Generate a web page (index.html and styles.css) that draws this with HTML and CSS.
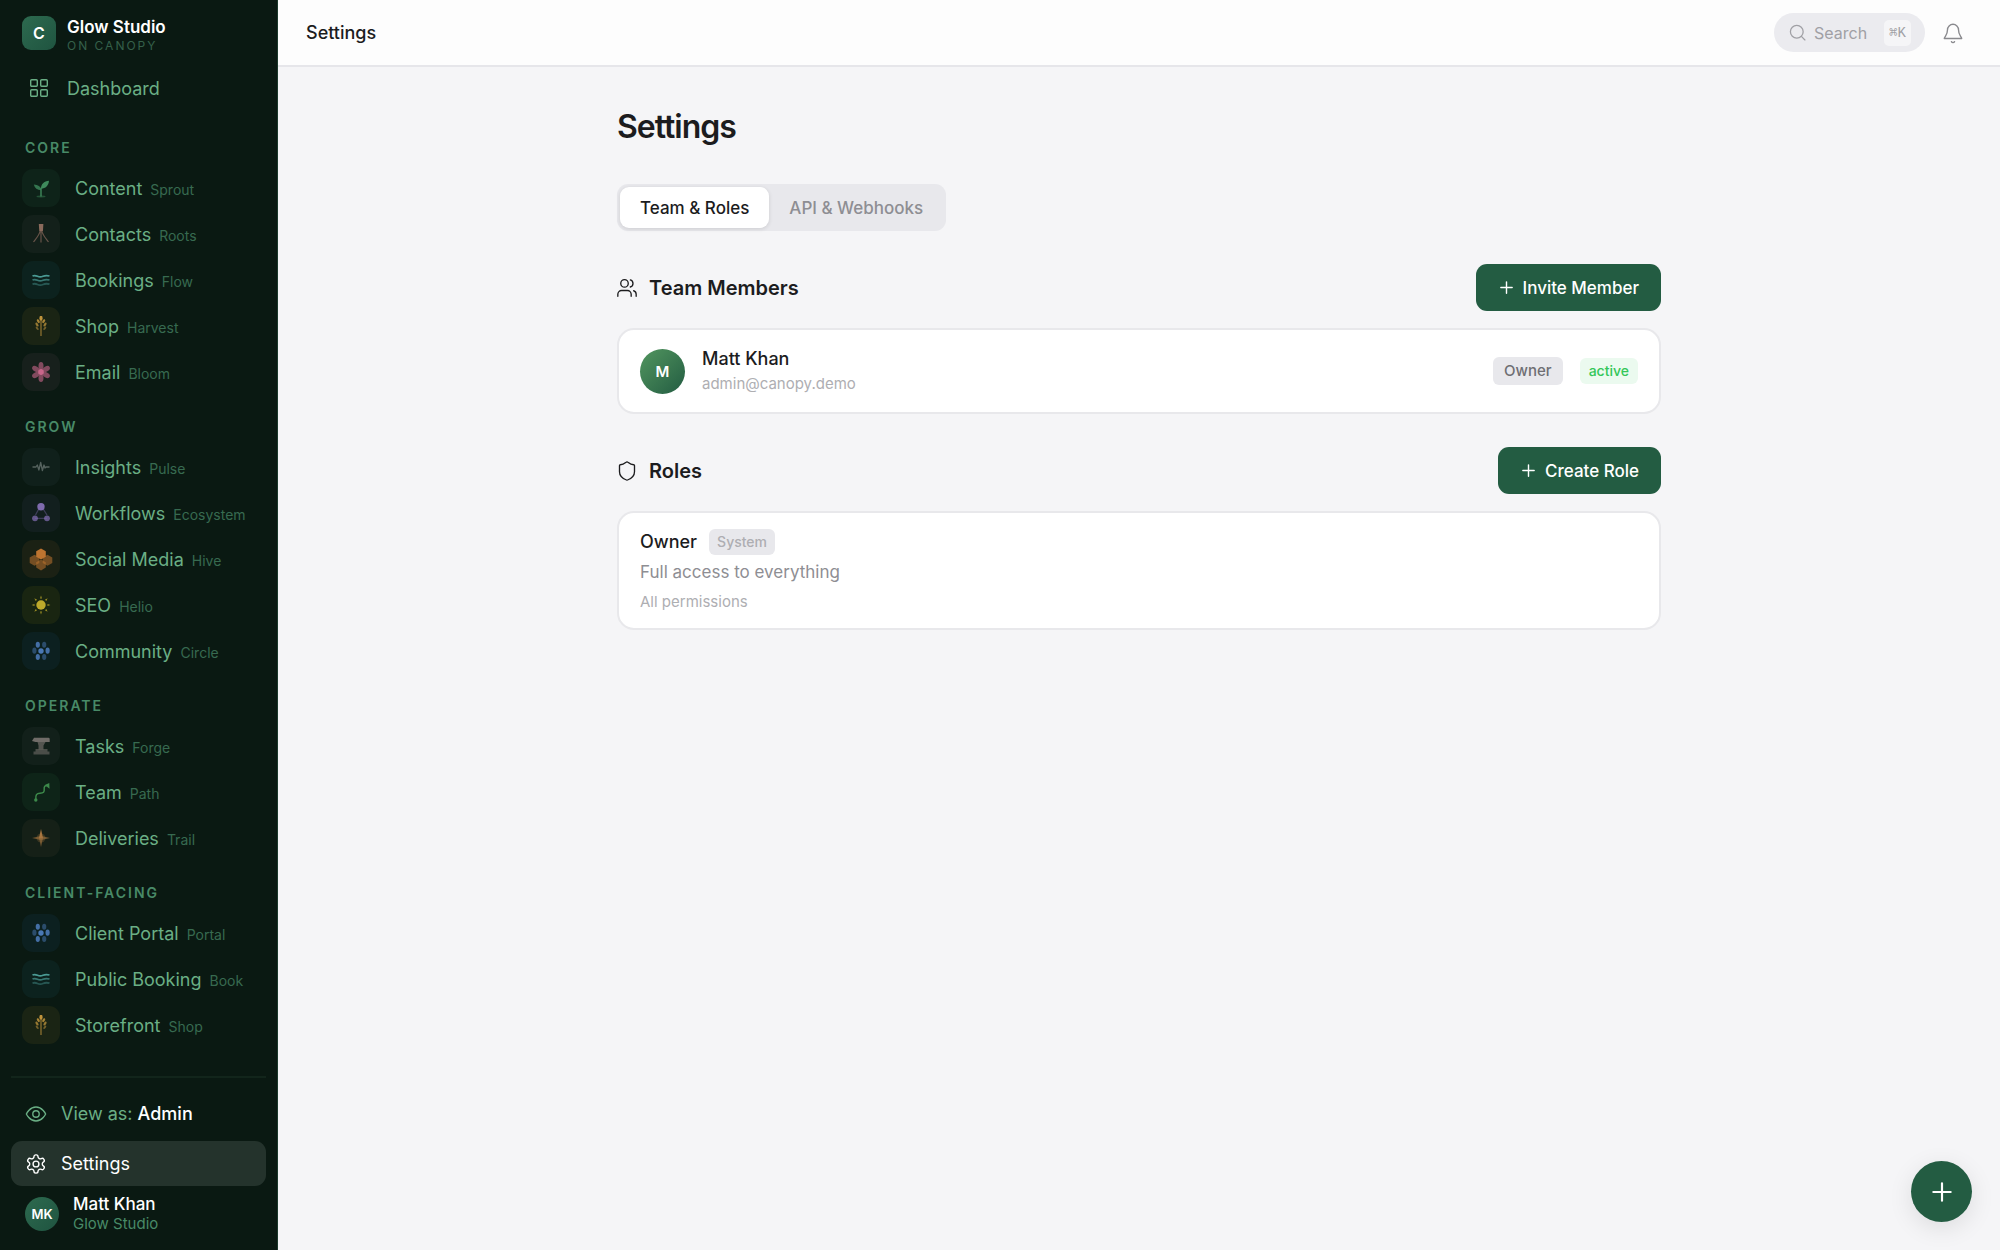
FILE: index.html
```html
<!DOCTYPE html>
<html lang="en">
<head>
  <meta charset="UTF-8">
  <meta name="viewport" content="width=device-width, initial-scale=1.0">
  <title>Settings - Glow Studio</title>
  <link rel="stylesheet" href="styles.css">
</head>
<body>
  <!-- Icons used more than once -->
  <svg class="sprite" aria-hidden="true">
    <symbol id="icon-waves" viewBox="0 0 20 20">
      <g fill="none" stroke="currentColor" stroke-width="1.8">
        <path d="M1.5 6c2-.9 3.5-.4 5 .3s3.500.9 5.5 0 4-1 6.500-.3"/>
        <path d="M1.500 10c2-.9 3.500-.4 5 .3s3.500.9 5.500 0 4-1 6.500-.3" opacity=".7"/>
        <path d="M1.500 14.200c2-.9 3.500-.4 5 .3s3.500.9 5.500 0 4-1 6.500-.3" opacity=".45"/>
      </g>
    </symbol>
    <symbol id="icon-wheat" viewBox="0 0 20 20">
      <path d="M10 5v15" stroke="currentColor" stroke-width="1.2" opacity=".75"/>
      <g fill="currentColor">
        <ellipse cx="10" cy="2.3" rx="1.6" ry="2.6"/>
        <ellipse cx="7.3" cy="5.2" rx="1.2" ry="2.2" transform="rotate(-30 7.3 5.2)" opacity=".85"/>
        <ellipse cx="12.7" cy="5.2" rx="1.2" ry="2.2" transform="rotate(30 12.7 5.2)" opacity=".85"/>
        <ellipse cx="6" cy="8.6" rx="1.2" ry="2.2" transform="rotate(-35 6 8.6)" opacity=".75"/>
        <ellipse cx="14" cy="8.6" rx="1.2" ry="2.2" transform="rotate(35 14 8.6)" opacity=".75"/>
        <ellipse cx="6.2" cy="12.3" rx="1" ry="2" transform="rotate(-40 6.2 12.3)" opacity=".55"/>
        <ellipse cx="13.8" cy="12.3" rx="1" ry="2" transform="rotate(40 13.8 12.3)" opacity=".55"/>
      </g>
    </symbol>
    <symbol id="icon-circle" viewBox="0 0 20 20">
      <g fill="currentColor">
        <circle cx="10" cy="10" r="2.7"/>
        <ellipse cx="6.8" cy="3.8" rx="2.1" ry="3" opacity=".9"/>
        <ellipse cx="13.2" cy="3.8" rx="2.1" ry="3" opacity=".5"/>
        <ellipse cx="3.4" cy="9.6" rx="2.1" ry="3.2" opacity=".5"/>
        <ellipse cx="16.6" cy="9.6" rx="2.1" ry="3.2" opacity=".9"/>
        <ellipse cx="6.8" cy="16" rx="2.1" ry="3" opacity=".9"/>
        <ellipse cx="13.2" cy="16" rx="2.1" ry="3" opacity=".5"/>
      </g>
    </symbol>
    <symbol id="icon-plus" viewBox="0 0 24 24">
      <path d="M12 4v16M4 12h16" fill="none" stroke="currentColor" stroke-width="2" stroke-linecap="round"/>
    </symbol>
  </svg>

  <div class="layout">
    <aside class="sidebar">
      <div class="brand">
        <span class="brand-logo">C</span>
        <div class="brand-text">
          <span class="brand-name">Glow Studio</span>
          <span class="brand-sub">ON CANOPY</span>
        </div>
      </div>

      <nav class="nav">
        <a class="nav-dashboard" href="#">
          <svg viewBox="0 0 18 18" fill="none" stroke="currentColor" stroke-width="1.4">
            <rect x=".7" y=".7" width="6.6" height="6.6" rx="1"/>
            <rect x="10.7" y=".7" width="6.6" height="6.6" rx="1"/>
            <rect x=".7" y="10.7" width="6.6" height="6.6" rx="1"/>
            <rect x="10.7" y="10.7" width="6.6" height="6.6" rx="1"/>
          </svg>
          Dashboard
        </a>

        <div class="nav-group">
          <h2 class="nav-label">CORE</h2>
          <a class="nav-item" href="#">
            <span class="tile sprout"><svg viewBox="0 0 20 20">
              <path d="M10 18.5V9.8" stroke="currentColor" stroke-width="1.4"/>
              <path d="M10 10.8C9.8 6.2 13 3.4 18 2.8c-.4 4.9-3.4 7.7-8 8z" fill="currentColor"/>
              <path d="M10 12.2C6.2 12.2 3.8 10.3 2.8 6.6c4.2.2 7 2 7.2 5.6z" fill="currentColor" opacity=".8"/>
              <ellipse cx="10" cy="18.5" rx="4.5" ry=".9" fill="currentColor" opacity=".45"/>
            </svg></span>
            <span class="nav-name">Content</span><span class="nav-alias">Sprout</span>
          </a>
          <a class="nav-item" href="#">
            <span class="tile roots"><svg viewBox="0 0 20 20">
              <path d="M7.8 0h4.6l-.5 7H8.3z" fill="currentColor"/>
              <path d="M10 6v12.5M9.2 6.500C8.500 11 5.500 14 2.500 18M10.800 6.500C11.500 11 14.500 14 17.500 18" fill="none" stroke="currentColor" stroke-width="1.2" opacity=".7"/>
            </svg></span>
            <span class="nav-name">Contacts</span><span class="nav-alias">Roots</span>
          </a>
          <a class="nav-item" href="#">
            <span class="tile flow"><svg><use href="#icon-waves"/></svg></span>
            <span class="nav-name">Bookings</span><span class="nav-alias">Flow</span>
          </a>
          <a class="nav-item" href="#">
            <span class="tile harvest"><svg><use href="#icon-wheat"/></svg></span>
            <span class="nav-name">Shop</span><span class="nav-alias">Harvest</span>
          </a>
          <a class="nav-item" href="#">
            <span class="tile bloom"><svg viewBox="0 0 20 20">
              <g fill="currentColor" opacity=".6">
                <ellipse cx="10" cy="4" rx="2.5" ry="4"/>
                <ellipse cx="10" cy="4" rx="2.5" ry="4" transform="rotate(60 10 10)"/>
                <ellipse cx="10" cy="4" rx="2.5" ry="4" transform="rotate(120 10 10)"/>
                <ellipse cx="10" cy="4" rx="2.5" ry="4" transform="rotate(180 10 10)"/>
                <ellipse cx="10" cy="4" rx="2.5" ry="4" transform="rotate(240 10 10)"/>
                <ellipse cx="10" cy="4" rx="2.5" ry="4" transform="rotate(300 10 10)"/>
              </g>
              <circle cx="10" cy="10" r="2.9" fill="currentColor"/>
            </svg></span>
            <span class="nav-name">Email</span><span class="nav-alias">Bloom</span>
          </a>
        </div>

        <div class="nav-group">
          <h2 class="nav-label">GROW</h2>
          <a class="nav-item" href="#">
            <span class="tile pulse"><svg viewBox="0 0 20 20">
              <path d="M1.500 10H5l1.300-2 1.600 5 1.800-7.500 1.700 8L13 8l1 3 1-1h3.500" fill="none" stroke="currentColor" stroke-width="1.3" stroke-linejoin="round"/>
            </svg></span>
            <span class="nav-name">Insights</span><span class="nav-alias">Pulse</span>
          </a>
          <a class="nav-item" href="#">
            <span class="tile ecosystem"><svg viewBox="0 0 20 20">
              <path d="M7.500 6.500 4.500 12M12.500 6.500l3.500 5.500M4 15.300h12" stroke="currentColor" stroke-width="1.3" opacity=".4"/>
              <circle cx="10" cy="3.8" r="3.7" fill="currentColor"/>
              <circle cx="4" cy="15.3" r="2.9" fill="currentColor" opacity=".75"/>
              <circle cx="16" cy="15.3" r="2.9" fill="currentColor" opacity=".75"/>
            </svg></span>
            <span class="nav-name">Workflows</span><span class="nav-alias">Ecosystem</span>
          </a>
          <a class="nav-item" href="#">
            <span class="tile hive"><svg viewBox="0 0 20 20" fill="currentColor">
              <path d="M3.500 5.800 8.300 8.500v5.400l-4.800 2.800-4.800-2.800V8.500z" opacity=".55"/>
              <path d="M16.500 5.800l4.800 2.700v5.400l-4.800 2.800-4.800-2.800V8.500z" opacity=".55"/>
              <path d="M10 10.500l4.800 2.700v5.400L10 21.400l-4.800-2.800v-5.400z" opacity=".55"/>
              <path d="M10-.5l4.800 2.700v5.600L10 10.500 5.200 7.800V2.200z"/>
            </svg></span>
            <span class="nav-name">Social Media</span><span class="nav-alias">Hive</span>
          </a>
          <a class="nav-item" href="#">
            <span class="tile helio"><svg viewBox="0 0 20 20" fill="currentColor">
              <circle cx="10" cy="10" r="4.7"/>
              <g opacity=".8">
                <path d="M9 3.500 10 .6l1 2.900z"/>
                <path d="M9 3.500 10 .6l1 2.900z" transform="rotate(45 10 10)"/>
                <path d="M9 3.500 10 .6l1 2.900z" transform="rotate(90 10 10)"/>
                <path d="M9 3.500 10 .6l1 2.900z" transform="rotate(135 10 10)"/>
                <path d="M9 3.500 10 .6l1 2.900z" transform="rotate(180 10 10)"/>
                <path d="M9 3.500 10 .6l1 2.900z" transform="rotate(225 10 10)"/>
                <path d="M9 3.500 10 .6l1 2.900z" transform="rotate(270 10 10)"/>
                <path d="M9 3.500 10 .6l1 2.900z" transform="rotate(315 10 10)"/>
              </g>
            </svg></span>
            <span class="nav-name">SEO</span><span class="nav-alias">Helio</span>
          </a>
          <a class="nav-item" href="#">
            <span class="tile circle"><svg><use href="#icon-circle"/></svg></span>
            <span class="nav-name">Community</span><span class="nav-alias">Circle</span>
          </a>
        </div>

        <div class="nav-group">
          <h2 class="nav-label">OPERATE</h2>
          <a class="nav-item" href="#">
            <span class="tile forge"><svg viewBox="0 0 20 20" fill="currentColor">
              <path d="M3 1.800h14.500q1.200 0 1.200 1.200v3H4.500L1 5z"/>
              <path d="M6.500 6h8l-2 3.500v4h-5v-4z" opacity=".7"/>
              <path d="M4.500 13h12v2.500h2v3H2.500v-3h2z" opacity=".6"/>
            </svg></span>
            <span class="nav-name">Tasks</span><span class="nav-alias">Forge</span>
          </a>
          <a class="nav-item" href="#">
            <span class="tile path"><svg viewBox="0 0 20 20">
              <path d="M4.800 17.500C4.500 13 5.500 11.300 9 11.200s4.500-1.200 4.200-4 .8-3.700 3-3.700" fill="none" stroke="currentColor" stroke-width="1.5"/>
              <circle cx="4.8" cy="18" r="1.7" fill="currentColor"/>
              <path d="M13.800 3 18.300 1l.2 5.800z" fill="currentColor"/>
            </svg></span>
            <span class="nav-name">Team</span><span class="nav-alias">Path</span>
          </a>
          <a class="nav-item" href="#">
            <span class="tile trail"><svg viewBox="0 0 20 20" fill="currentColor">
              <circle cx="10" cy="10" r="4.5" opacity=".25"/>
              <path d="M1 10l7.500-1.800h3L19 10l-7.500 1.800h-3z" opacity=".6"/>
              <path d="M10 1l2 9h-4z"/>
              <path d="M10 19l2-9h-4z" opacity=".6"/>
            </svg></span>
            <span class="nav-name">Deliveries</span><span class="nav-alias">Trail</span>
          </a>
        </div>

        <div class="nav-group">
          <h2 class="nav-label">CLIENT-FACING</h2>
          <a class="nav-item" href="#">
            <span class="tile circle"><svg><use href="#icon-circle"/></svg></span>
            <span class="nav-name">Client Portal</span><span class="nav-alias">Portal</span>
          </a>
          <a class="nav-item" href="#">
            <span class="tile flow"><svg><use href="#icon-waves"/></svg></span>
            <span class="nav-name">Public Booking</span><span class="nav-alias">Book</span>
          </a>
          <a class="nav-item" href="#">
            <span class="tile harvest"><svg><use href="#icon-wheat"/></svg></span>
            <span class="nav-name">Storefront</span><span class="nav-alias">Shop</span>
          </a>
        </div>
      </nav>

      <div class="sidebar-footer">
        <button class="footer-link" type="button">
          <svg viewBox="0 0 24 24" fill="none" stroke="currentColor" stroke-width="1.5" stroke-linecap="round" stroke-linejoin="round">
            <path d="M1.500 12S5 4.300 12 4.300 22.500 12 22.500 12 19 19.700 12 19.700 1.500 12 1.500 12z"/>
            <circle cx="12" cy="12" r="3.5"/>
          </svg>
          <span>View as: <strong>Admin</strong></span>
        </button>
        <a class="footer-link active" href="#">
          <svg viewBox="0 0 24 24" fill="none" stroke="currentColor" stroke-width="1.5" stroke-linecap="round" stroke-linejoin="round">
            <path d="M12.220 2h-.44a2 2 0 0 0-2 2v.18a2 2 0 0 1-1 1.730l-.43.25a2 2 0 0 1-2 0l-.15-.08a2 2 0 0 0-2.730.73l-.22.38a2 2 0 0 0 .73 2.730l.15.1a2 2 0 0 1 1 1.720v.51a2 2 0 0 1-1 1.740l-.15.09a2 2 0 0 0-.73 2.730l.22.38a2 2 0 0 0 2.730.73l.15-.08a2 2 0 0 1 2 0l.43.25a2 2 0 0 1 1 1.730V20a2 2 0 0 0 2 2h.44a2 2 0 0 0 2-2v-.18a2 2 0 0 1 1-1.730l.43-.25a2 2 0 0 1 2 0l.15.08a2 2 0 0 0 2.730-.73l.22-.39a2 2 0 0 0-.73-2.730l-.15-.08a2 2 0 0 1-1-1.740v-.5a2 2 0 0 1 1-1.740l.15-.09a2 2 0 0 0 .73-2.730l-.22-.38a2 2 0 0 0-2.730-.73l-.15.08a2 2 0 0 1-2 0l-.43-.25a2 2 0 0 1-1-1.730V4a2 2 0 0 0-2-2z"/>
            <circle cx="12" cy="12" r="3.2"/>
          </svg>
          <span>Settings</span>
        </a>
        <div class="user">
          <span class="user-avatar">MK</span>
          <div class="user-text">
            <span class="user-name">Matt Khan</span>
            <span class="user-org">Glow Studio</span>
          </div>
        </div>
      </div>
    </aside>

    <div class="page">
      <header class="topbar">
        <span class="topbar-title">Settings</span>
        <div class="topbar-actions">
          <button class="search" type="button">
            <svg viewBox="0 0 24 24" fill="none" stroke="currentColor" stroke-width="1.8" stroke-linecap="round">
              <circle cx="11" cy="11" r="9"/>
              <path d="M22.500 22.500l-5-5"/>
            </svg>
            <span>Search</span>
            <kbd>⌘K</kbd>
          </button>
          <button class="bell" type="button" aria-label="Notifications">
            <svg viewBox="0 0 24 24" fill="none" stroke="currentColor" stroke-width="1.5" stroke-linecap="round" stroke-linejoin="round">
              <path d="M6 8.500a6 6 0 0 1 12 0c0 6 3 7 3.500 9.500h-19C3 15.500 6 14.500 6 8.500"/>
              <path d="M10.300 21.500a2 2 0 0 0 3.400 0"/>
            </svg>
          </button>
        </div>
      </header>

      <main class="content">
        <h1>Settings</h1>

        <div class="tabs">
          <button class="tab active" type="button">Team &amp; Roles</button>
          <button class="tab" type="button">API &amp; Webhooks</button>
        </div>

        <section class="section">
          <div class="section-head">
            <svg viewBox="0 0 24 24" fill="none" stroke="currentColor" stroke-width="1.6" stroke-linecap="round" stroke-linejoin="round">
              <path d="M17 22v-2.500a4.500 4.500 0 0 0-4.500-4.500h-7A4.500 4.500 0 0 0 1 19.500V22"/>
              <circle cx="9" cy="6.5" r="4.5"/>
              <path d="M23 22v-2.500a4.500 4.500 0 0 0-3-4.200"/>
              <path d="M16 2.200a4.500 4.500 0 0 1 0 8.600"/>
            </svg>
            <h2>Team Members</h2>
            <button class="btn" type="button"><svg><use href="#icon-plus"/></svg>Invite Member</button>
          </div>
          <div class="card member">
            <span class="member-avatar">M</span>
            <div class="member-text">
              <span class="card-title">Matt Khan</span>
              <span class="card-note">admin@canopy.demo</span>
            </div>
            <span class="badge role">Owner</span>
            <span class="badge status">active</span>
          </div>
        </section>

        <section class="section">
          <div class="section-head">
            <svg viewBox="0 0 24 24" fill="none" stroke="currentColor" stroke-width="1.6" stroke-linecap="round" stroke-linejoin="round">
              <path d="M21 13c0 5.500-3.500 8-8.300 9.800a2 2 0 0 1-1.400 0C6.500 21 3 18.500 3 13V5.500a1 1 0 0 1 1-1c2.200 0 4.800-1.300 6.900-3a1.500 1.500 0 0 1 2.200 0c2.100 1.700 4.700 3 6.900 3a1 1 0 0 1 1 1z"/>
            </svg>
            <h2>Roles</h2>
            <button class="btn" type="button"><svg><use href="#icon-plus"/></svg>Create Role</button>
          </div>
          <div class="card role-card">
            <div class="role-head">
              <span class="card-title">Owner</span>
              <span class="badge system">System</span>
            </div>
            <span class="role-desc">Full access to everything</span>
            <span class="card-note">All permissions</span>
          </div>
        </section>
      </main>
    </div>
  </div>

  <button class="fab" type="button" aria-label="Quick add"><svg><use href="#icon-plus"/></svg></button>
</body>
</html>
```
FILE: styles.css
```css
* {
  box-sizing: border-box;
}

body {
  margin: 0;
  font-family: Inter, 'Liberation Sans', sans-serif;
  background: #f5f5f7;
  color: #1c1c1e;
  font-size: 18px;
}

button {
  font-family: inherit;
  border: none;
  background: none;
  padding: 0;
  cursor: pointer;
}

a {
  color: inherit;
  text-decoration: none;
}

h1,
h2 {
  margin: 0;
}

.sprite {
  display: none;
}

.layout {
  display: flex;
  min-height: 100vh;
}

/* Sidebar */
.sidebar {
  width: 278px;
  flex-shrink: 0;
  display: flex;
  flex-direction: column;
  height: 100vh;
  position: sticky;
  top: 0;
  background: #0a1912;
  border-right: 1px solid #1b3a2c;
  color: #6aaf85;
}

.brand {
  display: flex;
  align-items: center;
  gap: 11px;
  height: 66px;
  padding-left: 22px;
}

.brand-logo {
  width: 34px;
  height: 34px;
  display: flex;
  align-items: center;
  justify-content: center;
  border-radius: 9px;
  background: linear-gradient(135deg, #2d6a4f, #1f5440);
  color: #fff;
  font-size: 16px;
  font-weight: 600;
}

.brand-text {
  display: flex;
  flex-direction: column;
  padding-top: 3px;
}

.brand-name {
  color: #fff;
  font-size: 17px;
  font-weight: 600;
  line-height: 22px;
}

.brand-sub {
  color: #35604a;
  font-size: 12px;
  line-height: 16px;
  letter-spacing: 2px;
}

.nav {
  flex: 1;
  overflow: hidden;
}

.nav-dashboard {
  display: flex;
  align-items: center;
  gap: 19px;
  height: 44px;
  padding-left: 30px;
}

.nav-dashboard svg {
  width: 18px;
  height: 18px;
}

.nav-group {
  display: flex;
  flex-direction: column;
  gap: 8px;
  padding: 29px 0 0 22px;
}

.nav-group + .nav-group {
  padding-top: 27px;
}

.nav-label {
  margin: 0 0 4px 3px;
  color: #488a67;
  font-size: 14px;
  font-weight: 600;
  line-height: 18px;
  letter-spacing: 2px;
}

.nav-item {
  display: flex;
  align-items: center;
  height: 38px;
}

.nav-name {
  margin-left: 15px;
}

.nav-alias {
  margin: 2px 0 0 8px;
  color: #376a50;
  font-size: 14px;
}

.tile {
  width: 38px;
  height: 38px;
  display: flex;
  align-items: center;
  justify-content: center;
  border-radius: 11px;
}

.tile svg {
  width: 20px;
  height: 20px;
  overflow: visible;
}

.tile.sprout { background: #0e2319; color: #3f8a5c; }
.tile.roots { background: #13201a; color: #8a6a5c; }
.tile.flow { background: #0c221e; color: #4a9a94; }
.tile.harvest { background: #1a2414; color: #c0943c; }
.tile.bloom { background: #17201c; color: #c9668a; }
.tile.pulse { background: #10201b; color: #56635f; }
.tile.ecosystem { background: #121f1e; color: #7f6bad; }
.tile.hive { background: #1b2114; color: #bd7430; }
.tile.helio { background: #192511; color: #bda92b; }
.tile.circle { background: #0c2020; color: #4a78b5; }
.tile.forge { background: #12201a; color: #706c68; }
.tile.path { background: #0e2418; color: #3d8a4b; }
.tile.trail { background: #152017; color: #a8763f; }

.sidebar-footer {
  display: flex;
  flex-direction: column;
  margin: 0 11px;
  padding: 13px 0 16px;
  border-top: 2px solid #12251b;
}

.footer-link {
  display: flex;
  align-items: center;
  gap: 14px;
  height: 45px;
  margin-bottom: 5px;
  padding-left: 14px;
  border-radius: 11px;
  color: #6aaf85;
  font-size: 18px;
}

.footer-link svg {
  width: 22px;
  height: 22px;
}

.footer-link strong {
  color: #fff;
  font-weight: 500;
}

.footer-link.active {
  margin-bottom: 8px;
  background: #24332c;
  color: #fff;
}

.user {
  display: flex;
  align-items: center;
  gap: 14px;
  padding-left: 14px;
}

.user-avatar {
  width: 34px;
  height: 34px;
  display: flex;
  align-items: center;
  justify-content: center;
  border-radius: 50%;
  background: linear-gradient(135deg, #2d6a4f, #1f5440);
  color: #fff;
  font-size: 13px;
  font-weight: 600;
}

.user-text {
  display: flex;
  flex-direction: column;
}

.user-name {
  color: #fff;
  font-size: 17px;
  font-weight: 500;
  line-height: 20px;
}

.user-org {
  color: #488a67;
  font-size: 15px;
  line-height: 20px;
}

/* Top bar */
.page {
  flex: 1;
  min-width: 0;
}

.topbar {
  display: flex;
  align-items: center;
  justify-content: space-between;
  height: 67px;
  padding: 0 36px 0 28px;
  background: #fdfdfd;
  border-bottom: 2px solid #e6e6ea;
}

.topbar-title {
  font-size: 18px;
  font-weight: 500;
}

.topbar-actions {
  display: flex;
  align-items: center;
  gap: 17px;
}

.search {
  display: flex;
  align-items: center;
  height: 39px;
  padding: 0 14px 0 15px;
  border-radius: 20px;
  background: #ebebef;
  color: #a0a0a5;
  font-size: 16px;
}

.search svg {
  width: 17px;
  height: 17px;
  margin-right: 8px;
}

.search kbd {
  margin-left: 17px;
  padding: 0 5px;
  border-radius: 5px;
  background: #f5f5f7;
  font-family: 'Liberation Mono', monospace;
  font-size: 14px;
  line-height: 26px;
}

.bell {
  height: 22px;
  color: #8a8a8e;
}

.bell svg {
  width: 22px;
  height: 22px;
}

/* Settings content */
.content {
  max-width: 1108px;
  margin: 0 auto;
  padding: 39px 32px;
}

h1 {
  font-size: 32px;
  font-weight: 600;
  line-height: 42px;
  letter-spacing: -1px;
}

.tabs {
  display: flex;
  width: fit-content;
  margin-top: 36px;
  padding: 3px;
  border-radius: 11px;
  background: #e8e8ec;
}

.tab {
  height: 41px;
  padding: 0 20px;
  border-radius: 9px;
  color: #8e8e93;
  font-size: 17px;
  font-weight: 500;
}

.tab.active {
  background: #fff;
  color: #1c1c1e;
  box-shadow: 0 1px 4px rgba(0, 0, 0, 0.12);
}

.section {
  margin-top: 33px;
}

.section-head {
  display: flex;
  align-items: center;
  gap: 12px;
  margin-bottom: 17px;
}

.section-head > svg {
  width: 20px;
  height: 20px;
}

.section-head h2 {
  font-size: 20px;
  font-weight: 600;
}

.btn {
  display: flex;
  align-items: center;
  gap: 8px;
  height: 47px;
  margin-left: auto;
  padding: 0 22px;
  border-radius: 11px;
  background: #235c42;
  color: #fff;
  font-size: 17px;
  font-weight: 500;
}

.btn svg {
  width: 17px;
  height: 17px;
}

.card {
  border: 2px solid #e8e8eb;
  border-radius: 17px;
  background: #fff;
}

.card-title {
  font-size: 18px;
  font-weight: 500;
  line-height: 24px;
}

.card-note {
  color: #aeaeb2;
  font-size: 15px;
  line-height: 22px;
}

.member {
  display: flex;
  align-items: center;
  padding: 17px 21px;
}

.member-avatar {
  width: 45px;
  height: 45px;
  display: flex;
  align-items: center;
  justify-content: center;
  border-radius: 50%;
  background: linear-gradient(135deg, #52965f, #235c42);
  color: #fff;
  font-size: 15px;
  font-weight: 600;
}

.member-text {
  display: flex;
  flex-direction: column;
  flex: 1;
  gap: 2px;
  margin-left: 17px;
}

.badge {
  border-radius: 6px;
  background: #e8e8ec;
  font-size: 14px;
  font-weight: 500;
  line-height: 26px;
}

.badge.role {
  margin-right: 17px;
  padding: 0 11px;
  color: #6e6e73;
  font-size: 15px;
  line-height: 28px;
}

.badge.status {
  padding: 0 9px;
  background: #ebfaef;
  color: #34c759;
}

.badge.system {
  padding: 0 8px;
  color: #aeaeb2;
}

.role-card {
  display: flex;
  flex-direction: column;
  padding: 16px 21px 15px;
}

.role-head {
  display: flex;
  align-items: center;
  gap: 12px;
}

.role-desc {
  margin: 4px 0 6px;
  color: #8e8e93;
  font-size: 17px;
  line-height: 26px;
}

/* Floating action button */
.fab {
  position: fixed;
  right: 28px;
  bottom: 28px;
  width: 61px;
  height: 61px;
  display: flex;
  align-items: center;
  justify-content: center;
  border-radius: 50%;
  background: #235c42;
  color: #fff;
  box-shadow: 0 6px 24px rgba(0, 0, 0, 0.1);
}

.fab svg {
  width: 26px;
  height: 26px;
}
```
